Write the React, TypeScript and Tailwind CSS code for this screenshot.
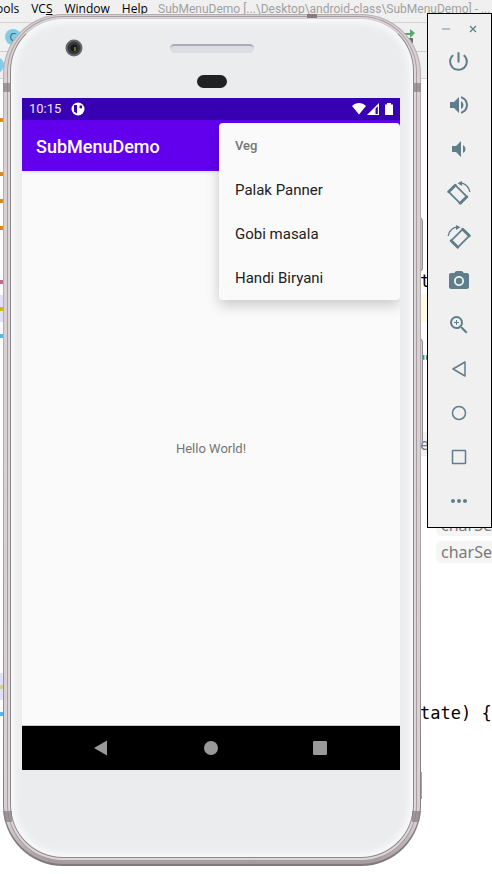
import type { ReactNode } from "react";
import { MdPowerSettingsNew, MdVolumeUp, MdVolumeDown, MdPhotoCamera, MdZoomIn, MdMoreHoriz } from "react-icons/md";

type Line = { mark?: string; gutter?: string; row?: string; code?: ReactNode };

const hint = (text: string) => (
  <span className="ml-4 rounded-md bg-[#f5f5f5] px-[5px] py-px font-['Noto_Sans',sans-serif] text-base leading-5 text-[#7a7a7a]">{text}</span>
);

const lines: Line[] = Array.from({ length: 30 }, () => ({}));
lines[1] = { mark: "bg-[#d98a1c]" };
lines[3] = { mark: "bg-[#d98a1c]" };
lines[4] = { mark: "bg-[#d98a1c]" };
lines[5] = { mark: "bg-[#d98a1c]" };
lines[7] = { mark: "bg-[#c06a90]", code: "t" };
lines[8] = { mark: "bg-[#d3b52c]", gutter: "bg-[#e0e0fa]", row: "bg-[#fffae3]" };
lines[9] = { mark: "bg-[#5ab4f0]" };
lines[10] = { code: <span className="text-[#2e8b57]">"</span> };
lines[13] = { code: <span className="bg-[#f2f2f2] font-['Noto_Sans',sans-serif] text-base leading-6 text-[#7a7a7a]">e</span> };
lines[16] = { code: hint("charSe") };
lines[17] = { code: hint("charSe") };
lines[22] = { mark: "bg-[#d8d08c]", gutter: "bg-[#e0e0fa]" };
lines[23] = { mark: "bg-[#5ab4f0]", code: "tate) {" };

function ClassBadge() {
  return <span className="flex size-4 items-center justify-center rounded-full bg-[#7fcde8] text-[11px] leading-4 text-[#35616f]">C</span>;
}

function Ide() {
  return (
    <main className="min-h-screen bg-white">
      <header className="bg-[#f0f0f0] font-['Open_Sans','Noto_Sans',sans-serif] text-xs text-black">
        <div className="flex h-[23px] items-start overflow-hidden whitespace-nowrap border-b border-[#d4d4d4]">
          <nav className="flex w-[158px] shrink-0 gap-3 leading-[18px]" aria-label="Main menu">
            <button className="-ml-1">ools</button>
            <button>VC<u>S</u></button>
            <button><u>W</u>indow</button>
            <button><u>H</u>elp</button>
          </nav>
          <span className="font-[Roboto,sans-serif] leading-[18px] text-[#a0a0a0]">SubMenuDemo [...\Desktop\android-class\SubMenuDemo] - ...</span>
        </div>
        <div className="flex h-[29px] items-center border-b border-[#cfcfcf] pl-[5px]">
          <ClassBadge />
          <svg className="ml-[383px]" width="34" height="20" viewBox="0 0 34 20" aria-hidden="true">
            <path d="M0 6h6V2l5 4-5 5V8H0z" fill="#59a869" />
            <path d="M4 11h5v5H4z" fill="#6e6e6e" />
            <circle cx="28" cy="10" r="5" fill="#59a869" />
          </svg>
        </div>
        <div className="flex h-[27px] items-center border-b border-[#cfcfcf]">
          <div className="-ml-3"><ClassBadge /></div>
        </div>
      </header>
      <div className="font-['DejaVu_Sans_Mono',monospace] text-[17px] text-black">
        {lines.map((l, i) => (
          <div key={i} className="grid h-[27px] grid-cols-[3px_417px_1fr] overflow-hidden">
            <span className={`flex items-center ${l.gutter ?? ""}`}>
              {l.mark && <span className={`h-1 w-full ${l.mark}`} />}
            </span>
            <span />
            <span className={`flex items-center overflow-hidden whitespace-pre ${l.row ?? ""}`}>{l.code}</span>
          </div>
        ))}
      </div>
    </main>
  );
}

function StatusBar() {
  return (
    <div className="flex h-[22px] items-center bg-[#3700b3] pl-[7px] pr-[6px] text-white">
      <span className="text-[13px] leading-4 text-[#ebe5f7]">10:15</span>
      <svg className="ml-[10px]" width="14" height="14" viewBox="0 0 14 14" aria-hidden="true">
        <circle cx="7" cy="7" r="6.500" fill="#fff" />
        <path d="M3 3h3v8.500L3 9.500zM8.600 3.500H11v2.800H8.600z" fill="#3700b3" />
      </svg>
      <svg className="ml-auto" width="42" height="14" viewBox="0 0 42 14" aria-label="Wi-Fi, signal, battery">
        <path d="M0 4C4-.1 10-.1 14 4L7 12.500z" fill="#fff" />
        <path d="M15 13 27 1v12z" fill="#fff" />
        <path d="M23.500 6.500 25.800 4.200V12h-2.300z" fill="#3700b3" />
        <path d="M33 2.500h2V1h4v1.500h2V13h-8z" fill="#fff" />
      </svg>
    </div>
  );
}

function SubMenu() {
  return (
    <div role="menu" aria-label="Veg" className="absolute right-0 top-[25px] flex h-[177px] w-[181px] flex-col rounded-sm bg-[#fafafa] shadow-[0_5px_14px_rgba(0,0,0,0.2)]">
      <div className="flex h-[45px] items-center px-4 text-[13px] font-medium text-[#757575]">Veg</div>
      {["Palak Panner", "Gobi masala", "Handi Biryani"].map((t) => (
        <button key={t} role="menuitem" className="flex h-11 items-center px-4 text-left text-[15px] text-[#212121]">{t}</button>
      ))}
    </div>
  );
}

function Screen() {
  return (
    <section className="relative flex h-[672px] flex-col overflow-hidden bg-[#fafafa] font-[Roboto,sans-serif]">
      <StatusBar />
      <div className="flex h-[51px] items-center bg-[#6200ee] pl-[14px] pt-[2px] shadow-[0_1px_3px_rgba(0,0,0,0.15)]">
        <h1 className="text-lg font-medium text-white">SubMenuDemo</h1>
      </div>
      <div className="flex flex-1 items-center justify-center pt-px text-[13px] text-[#757575]">Hello World!</div>
      <div className="flex h-[45px] items-center justify-between border-t border-[#c8c8c8] bg-black px-[71px]">
        <button aria-label="Back"><svg width="15" height="16" viewBox="0 0 15 16"><path d="M1 8 14 .5v15z" fill="#999" /></svg></button>
        <button aria-label="Home" className="size-[14px] rounded-full bg-[#999]" />
        <button aria-label="Overview" className="mr-[2px] size-[14px] rounded-[1px] bg-[#999]" />
      </div>
      <SubMenu />
    </section>
  );
}

function Phone() {
  return (
    <div className="absolute left-[3px] top-[14px] w-[418px]">
      <div className="absolute -right-[2px] top-[203px] h-[55px] w-2 rounded-sm border border-[#8f8f8f] bg-[#c4c4c4]" />
      <div className="absolute -right-[2px] top-[324px] h-[108px] w-2 rounded-sm border border-[#8f8f8f] bg-[#d0d0d0]" />
      <div className="absolute -right-px top-[758px] h-[27px] w-2 bg-[#a8a2a4]" />
      <div className="relative overflow-hidden rounded-[60px] bg-linear-to-b from-[#b5adaf] from-50% to-[#81787c] px-px pb-[2px] pt-px">
        <div className="rounded-[59px] bg-linear-to-b from-[#d8d0d2] from-95% to-[#a39a9e] px-[3px] pb-[3px] pt-px">
          <div className="rounded-[56px] bg-[#a59da0] p-px">
            <div className="rounded-[55px] bg-[#ddd6d8] px-[2px] pb-[2px] pt-px">
              <div className="rounded-[53px] border border-[#8e898c] border-t-[#d0cdd0] bg-[#ebecee] pb-[87px] pl-[11px] pr-[13px] shadow-[inset_0_0_7px_4px_#f8f9fa]">
                <div className="flex h-[79px] items-start justify-between pl-[43px]">
                  <svg className="mt-[20px]" width="18" height="18" viewBox="0 0 18 18" aria-hidden="true">
                    <circle cx="9" cy="9" r="8.500" fill="#66676a" />
                    <circle cx="9" cy="9" r="6.500" fill="#38393b" />
                    <circle cx="9" cy="9" r="3.500" fill="#171819" />
                    <path d="M9 8h2v4H9z" fill="#6d6b35" />
                  </svg>
                  <div className="mr-[60px] flex flex-col items-center">
                    <div className="mt-[25px] h-[9px] w-[84px] rounded-full border-t-2 border-[#a9acb7] bg-[#dcdde0]" />
                    <div className="mt-[22px] h-[13px] w-[30px] rounded-full bg-[#1f2123]" />
                  </div>
                  <span className="w-0" />
                </div>
                <Screen />
              </div>
            </div>
          </div>
        </div>
        <div className="absolute left-0 top-[69px] h-[9px] w-[7px] bg-[#857c80]/70" />
        <div className="absolute right-0 top-[69px] h-[9px] w-[7px] bg-[#857c80]/70" />
        <div className="absolute left-[304px] top-0 h-1 w-[10px] bg-[#857c80]" />
        <div className="absolute bottom-[44px] left-0 h-[11px] w-[9px] bg-[#857c80]/70" />
        <div className="absolute bottom-[44px] right-0 h-[11px] w-[9px] bg-[#857c80]/70" />
      </div>
    </div>
  );
}

function RotateIcon({ flip = false }: { flip?: boolean }) {
  return (
    <svg width="24" height="24" viewBox="0 0 24 24" fill="none" stroke="currentColor" className={flip ? "-scale-x-100" : ""}>
      <path d="M8.300 4.200 19.800 15.700 13.200 22.300 1.700 10.800z" strokeWidth="1.700" strokeLinejoin="round" />
      <path d="M8.300 4.200 1.700 10.800M19.800 15.700 13.200 22.300" strokeWidth="2.800" strokeLinecap="round" />
      <path d="M13 2c5 0 9 3.500 9.800 9" strokeWidth="1.400" />
      <path d="m10.500 2.300 4.500-2.300v5z" fill="currentColor" stroke="none" />
    </svg>
  );
}

const outline = (d: ReactNode) => (
  <svg width="22" height="22" viewBox="0 0 22 22" fill="none" stroke="currentColor" strokeWidth="1.500" strokeLinejoin="round">{d}</svg>
);

const tools: [string, ReactNode][] = [
  ["Power", <MdPowerSettingsNew size={25} />],
  ["Volume up", <MdVolumeUp size={24} />],
  ["Volume down", <MdVolumeDown size={24} />],
  ["Rotate left", <RotateIcon />],
  ["Rotate right", <RotateIcon flip />],
  ["Take screenshot", <MdPhotoCamera size={24} />],
  ["Zoom", <MdZoomIn size={24} />],
  ["Back", outline(<path d="M5 11 17 4v14z" />)],
  ["Home", outline(<circle cx="11" cy="11" r="6.500" />)],
  ["Overview", outline(<rect x="4.500" y="4.500" width="13" height="13" rx="0.500" />)],
  ["More", <MdMoreHoriz size={24} />],
];

function Toolbar() {
  return (
    <aside className="absolute left-[427px] right-0 top-[13px] flex h-[515px] flex-col border border-black bg-[#f0f0f0] text-[#607d8b]">
      <div className="flex h-[25px] items-center justify-between pl-[14px] pr-[14px] pt-1">
        <button aria-label="Minimize"><svg width="8" height="8" viewBox="0 0 8 8"><path d="M0 4h8" stroke="#9fb0b9" strokeWidth="1.500" /></svg></button>
        <button aria-label="Close"><svg width="8" height="8" viewBox="0 0 8 8"><path d="m1 1 6 6M7 1 1 7" stroke="currentColor" strokeWidth="1.300" /></svg></button>
      </div>
      {tools.map(([name, icon]) => (
        <button key={name} aria-label={name} className="flex h-11 shrink-0 items-center justify-center pr-[2px]">{icon}</button>
      ))}
    </aside>
  );
}

export default function App() {
  return (
    <div className="relative h-screen overflow-hidden">
      <Ide />
      <Phone />
      <Toolbar />
    </div>
  );
}
